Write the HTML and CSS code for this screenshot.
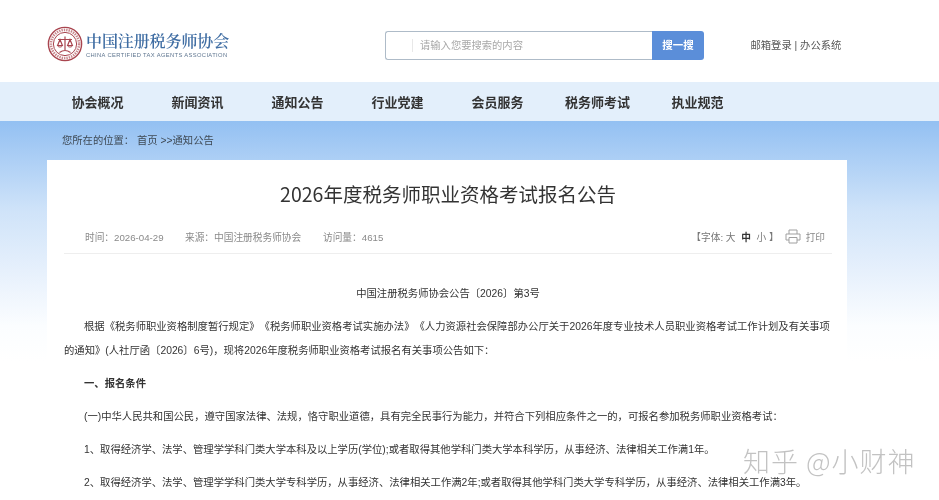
FILE: index.html
```html
<!DOCTYPE html>
<html lang="zh-CN">
<head>
<meta charset="utf-8">
<title>2026年度税务师职业资格考试报名公告</title>
<link rel="stylesheet" href="styles.css">
</head>
<body>
<header class="top">
  <a class="logo">
    <svg class="seal" width="36" height="36" viewBox="0 0 36 36" fill="none" stroke="#a9454f">
      <circle cx="18" cy="18" r="16.6" stroke-width="1.4"/>
      <circle cx="18" cy="18" r="11.6" stroke-width="1"/>
      <circle cx="18" cy="18" r="14.1" stroke-width="2.6" stroke-dasharray="1.4 1" stroke-opacity=".65"/>
      <path d="M11 13.5h14M18 10.5v14M13 13.5l-2.4 6h4.8zM23 13.5l-2.4 6h4.8zM12.5 26.5c2-1.5 3.5-2 5.5-2s3.500.5 5.500 2" stroke-width="1.200"/>
      <path d="M10.500 19.500c.5 2 4.500 2 5 0M20.500 19.500c.5 2 4.500 2 5 0" stroke-width="1"/>
    </svg>
    <span class="logo-text">
      <span class="logo-cn">中国注册税务师协会</span>
      <span class="logo-en">CHINA CERTIFIED TAX AGENTS ASSOCIATION</span>
    </span>
  </a>
  <form class="search">
    <span class="search-box"><span class="search-hint">请输入您要搜索的内容</span></span>
    <span class="search-btn">搜一搜</span>
  </form>
  <div class="top-links">邮箱登录 | 办公系统</div>
</header>

<nav class="nav">
  <a>协会概况</a>
  <a>新闻资讯</a>
  <a>通知公告</a>
  <a>行业党建</a>
  <a>会员服务</a>
  <a>税务师考试</a>
  <a>执业规范</a>
</nav>

<main class="main">
  <div class="crumb"><span class="crumb-label">您所在的位置：</span>首页 &gt;&gt;通知公告</div>
  <article class="card">
    <h1 class="title">2026年度税务师职业资格考试报名公告</h1>
    <div class="meta">
      <div class="meta-left">
        <span class="m-time">时间：2026-04-29</span>
        <span class="m-src">来源：中国注册税务师协会</span>
        <span>访问量：4615</span>
      </div>
      <div class="meta-right">
        <span class="fontsize">【字体: 大 <b>中</b> 小 】</span>
        <svg class="print" width="16" height="15" viewBox="0 0 16 15" fill="none" stroke="#a0a0a0" stroke-width="1">
          <path d="M4 5V1h8v4M4 11H1V5h14v6h-3M4 8.500h8V14H4z"/>
        </svg>
        <span>打印</span>
      </div>
    </div>
    <div class="content">
      <p class="center">中国注册税务师协会公告〔2026〕第3号</p>
      <p class="lead">根据《税务师职业资格制度暂行规定》《税务师职业资格考试实施办法》《人力资源社会保障部办公厅关于2026年度专业技术人员职业资格考试工作计划及有关事项的通知》(人社厅函〔2026〕6号)，现将2026年度税务师职业资格考试报名有关事项公告如下：</p>
      <p class="head">一、报名条件</p>
      <p>(一)中华人民共和国公民，遵守国家法律、法规，恪守职业道德，具有完全民事行为能力，并符合下列相应条件之一的，可报名参加税务师职业资格考试：</p>
      <p>1、取得经济学、法学、管理学学科门类大学本科及以上学历(学位);或者取得其他学科门类大学本科学历，从事经济、法律相关工作满1年。</p>
      <p>2、取得经济学、法学、管理学学科门类大学专科学历，从事经济、法律相关工作满2年;或者取得其他学科门类大学专科学历，从事经济、法律相关工作满3年。</p>
    </div>
  </article>
  <div class="watermark">知乎 @小财神</div>
</main>
</body>
</html>
```
FILE: styles.css
```css
* { box-sizing: border-box; }
html, body { margin: 0; height: 500px; overflow: hidden; background: #fff; }
body { font-family: "Liberation Sans", "Noto Sans CJK SC", sans-serif; color: #333; position: relative; text-spacing-trim: space-all; filter: blur(.3px); }
p, h1 { margin: 0; }

.top { height: 82px; display: flex; align-items: flex-start; padding-left: 47px; }
.logo { display: flex; align-items: center; width: 338px; height: 36px; margin-top: 26px; }
.seal { flex: none; margin-right: 3px; }
.logo-text { display: flex; flex-direction: column; padding-top: 1px; }
.logo-cn { font-family: "Noto Serif CJK SC", "Noto Sans CJK SC", serif; font-size: 16px; line-height: 19px; font-weight: 600; color: #3f6da3; letter-spacing: -.1px; }
.logo-en { font-family: "Liberation Sans", sans-serif; font-size: 5.8px; line-height: 8px; color: #5f7690; letter-spacing: .36px; white-space: nowrap; margin-top: 1px; }

.search { display: flex; width: 319px; height: 29px; margin-top: 31px; }
.search-box { flex: 1; display: flex; align-items: center; border: 1px solid #aebbc8; border-right: 0; border-radius: 3px 0 0 3px; padding-left: 26px; background: #fff; }
.search-hint { border-left: 1px solid #e8e8e8; padding-left: 7px; font-size: 10.300px; line-height: 13px; color: #a8a8a8; }
.search-btn { width: 52px; background: #5b8ed9; border-radius: 0 3px 3px 0; color: #fff; font-size: 10.500px; font-weight: 700; line-height: 29px; text-align: center; }
.top-links { margin: 38px 0 0 46.500px; font-size: 10.300px; line-height: 16px; color: #555; white-space: nowrap; }

.nav { height: 39px; padding-left: 47.500px; background: #e3effb; display: flex; align-items: center; }
.nav a { width: 100px; text-align: center; font-size: 13px; font-weight: 700; color: #333; }

.main { position: relative; height: 379px; padding: 0 92px 0 47px; background: linear-gradient(#93c0f2 0, #cfe3f9 89px, #e6f0fc 149px, #fbfdff 205px, #fff 240px); }
.crumb { height: 39px; padding-left: 15px; font-size: 10.300px; line-height: 39px; color: #3f4a55; }
.crumb-label { margin-right: 3px; }

.card { height: 340px; background: #fff; padding: 0 15px 0 17px; overflow: hidden; }
.title { height: 68px; font-family: "Noto Sans CJK SC", sans-serif; font-size: 19.500px; font-weight: 400; line-height: 68px; text-align: center; color: #333; }
.meta { display: flex; justify-content: space-between; align-items: center; height: 26px; padding: 0 7px 8px 21px; border-bottom: 1px solid #eee; font-size: 9.700px; color: #8a8a8a; }
.meta-left { display: flex; }
.m-time { width: 100px; }
.m-src { width: 138px; }
.meta-right { display: flex; align-items: center; }
.fontsize { color: #777; }
.fontsize b { color: #333; margin: 0 3px; }
.print { margin: 0 5px 0 6px; }

.content { font-size: 10.340px; line-height: 24px; color: #333; padding-top: 28px; }
.content p { text-indent: 20px; margin-bottom: 9px; }
.content .center { text-indent: 0; text-align: center; }
.content .head { font-weight: 700; color: #333; }

.watermark { position: absolute; left: 743px; top: 323px; font-family: "Noto Sans CJK SC", sans-serif; font-size: 27px; font-weight: 300; line-height: 34px; letter-spacing: 1px; color: rgba(120, 120, 120, .45); white-space: nowrap; }
```
